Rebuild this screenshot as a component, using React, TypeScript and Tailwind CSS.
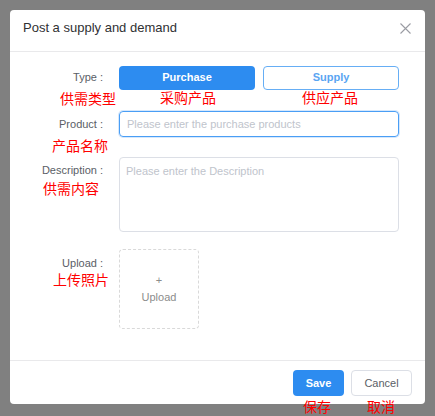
import React from "react";

const sans = { fontFamily: '"Liberation Sans", Arial, sans-serif' };
const cjk = "absolute whitespace-nowrap text-[14px] leading-[14px] text-[#ff0000] [font-family:'Noto_Sans_CJK_SC',sans-serif]";

function Label({ text, note, noteLeft }: { text: string; note: string; noteLeft: number }) {
  return (
    <div className="relative w-[93px] shrink-0 text-right text-[11px] leading-[26px] text-[#5a5e66]">
      {text}
      <span className="ml-[3px]">:</span>
      <span className={cjk} style={{ left: noteLeft, top: 27 }}>
        {note}
      </span>
    </div>
  );
}

export default function App() {
  return (
    <div className="w-[435px] h-[416px] bg-[#808080] pt-[10px] pl-[10px] overflow-hidden" style={sans}>
      <div className="w-[415px] h-[394px] bg-white rounded-[4px] flex flex-col">
        {/* header */}
        <div className="h-[42px] shrink-0 flex items-start justify-between pl-[13px] pr-[13px] pt-[10px] border-b border-[#e9e9eb]">
          <span className="text-[13px] leading-[16px] text-[#303133]">Post a supply and demand</span>
          <svg width="11" height="11" viewBox="0 0 11 11" className="mt-[3px] mr-[1px]">
            <path d="M0.5 0.5 L10.5 10.5 M10.5 0.5 L0.5 10.5" stroke="#9a9ca3" strokeWidth="1.1" />
          </svg>
        </div>

        {/* body */}
        <div className="flex-1 flex flex-col pt-[13px]">
          {/* type */}
          <div className="flex items-center h-[24px]">
            <div className="relative w-[93px] shrink-0 text-right text-[11px] leading-[24px] text-[#5a5e66]">
              Type<span className="ml-[3px]">:</span>
              <span className={cjk} style={{ left: 50, top: 26 }}>
                供需类型
              </span>
            </div>
            <div className="ml-[16px] flex gap-[8px]">
              <div className="relative">
                <button className="w-[136px] h-[24px] rounded-[4px] bg-[#2d8cf0] text-white text-[11px] font-bold">
                  Purchase
                </button>
                <span className={cjk} style={{ left: 41, top: 26 }}>
                  采购产品
                </span>
              </div>
              <div className="relative">
                <button className="w-[136px] h-[24px] rounded-[4px] bg-white border border-[#66aef5] text-[#5aa5f2] text-[11px] font-bold">
                  Supply
                </button>
                <span className={cjk} style={{ left: 39, top: 26 }}>
                  供应产品
                </span>
              </div>
            </div>
          </div>

          {/* product */}
          <div className="flex mt-[22px]">
            <Label text="Product" note="产品名称" noteLeft={42} />
            <div className="ml-[16px] w-[280px] h-[26px] rounded-[4px] border border-[#4a9ef5] shadow-[0_0_0_1px_#d6e8fc] flex items-center px-[7px] text-[11px] text-[#c0c4cc]">
              Please enter the purchase products
            </div>
          </div>

          {/* description */}
          <div className="flex mt-[20px]">
            <div className="relative w-[93px] shrink-0 text-right text-[11px] leading-[26px] text-[#5a5e66]">
              Description<span className="ml-[3px]">:</span>
              <span className={cjk} style={{ left: 33, top: 24 }}>
                供需内容
              </span>
            </div>
            <div className="ml-[16px] w-[280px] h-[75px] rounded-[4px] border border-[#dcdfe6] px-[6px] pt-[5px] text-[11px] text-[#c0c4cc]">
              Please enter the Description
            </div>
          </div>

          {/* upload */}
          <div className="flex mt-[17px]">
            <div className="relative w-[93px] shrink-0 text-right text-[11px] leading-[28px] text-[#5a5e66]">
              Upload<span className="ml-[3px]">:</span>
              <span className={cjk} style={{ left: 43, top: 23 }}>
                上传照片
              </span>
            </div>
            <div className="ml-[16px] w-[80px] h-[80px] rounded-[4px] border border-dashed border-[#d9d9d9] flex flex-col items-center justify-center text-[#8c8c8c] text-[11px]">
              <span className="leading-[14px]">+</span>
              <span className="leading-[16px] mt-[2px]">Upload</span>
            </div>
          </div>
        </div>

        {/* footer */}
        <div className="h-[44px] shrink-0 border-t border-[#e9e9eb] flex justify-end items-start pt-[9px] pr-[13px] gap-[7px]">
          <div className="relative">
            <button className="w-[51px] h-[26px] rounded-[4px] bg-[#2d8cf0] text-white text-[11px] font-bold">Save</button>
            <span className={cjk} style={{ left: 10, top: 29 }}>
              保存
            </span>
          </div>
          <div className="relative">
            <button className="w-[61px] h-[26px] rounded-[4px] bg-white border border-[#dcdfe6] text-[#5a5e66] text-[11px]">
              Cancel
            </button>
            <span className={cjk} style={{ left: 16, top: 29 }}>
              取消
            </span>
          </div>
        </div>
      </div>
    </div>
  );
}
